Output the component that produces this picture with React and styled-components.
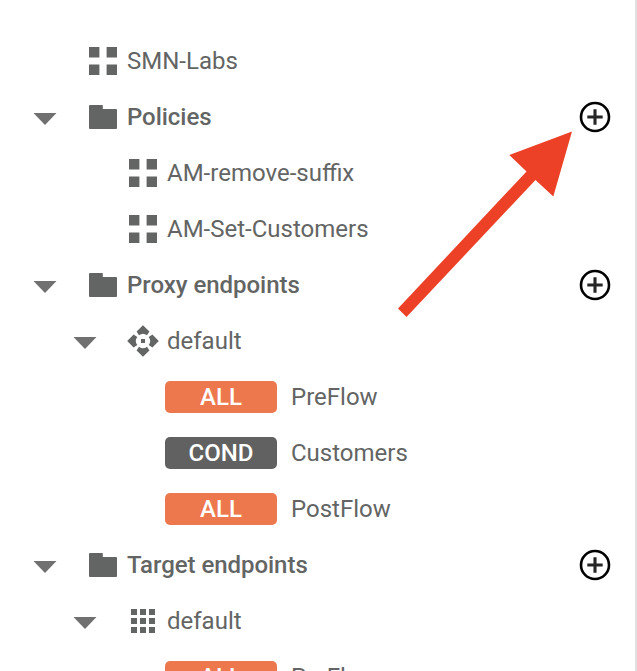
import React from "react";
import styled, { createGlobalStyle } from "styled-components";

const GlobalStyle = createGlobalStyle`
  html, body { margin: 0; background: #fff; overflow: hidden; }
`;

const Panel = styled.div`
  position: relative;
  box-sizing: border-box;
  width: 637px;
  height: 671px;
  padding-top: 33px;
  overflow: hidden;
  background: #fff;
  border-right: 2px solid #e0e0e0;
  font-family: Roboto, sans-serif;
  font-size: 24px;
  color: #636564;
`;

const Row = styled.div`
  display: flex;
  align-items: center;
  height: 56px;
  padding-left: ${(p) => 33 + p.$level * 40}px;
  padding-right: 24px;
`;

const CaretSlot = styled.span`
  display: flex;
  flex: none;
  width: 54px;
  padding-top: 4px;
`;

const IconSlot = styled.span`
  display: flex;
  flex: none;
  width: 40px;
`;

const Label = styled.span`
  flex: 1;
  line-height: 28px;
  white-space: nowrap;
  font-weight: ${(p) => (p.$strong ? 500 : 400)};
  letter-spacing: ${(p) => (p.$strong ? "-0.04px" : "normal")};
`;

const AddButton = styled.button`
  display: flex;
  padding: 0;
  border: 0;
  background: none;
  color: #000;
`;

const Badge = styled.span`
  display: flex;
  flex: none;
  align-items: center;
  justify-content: center;
  width: 112px;
  height: 32px;
  margin: 0 14px 0 12px;
  border-radius: 5px;
  background: ${(p) => (p.$kind === "ALL" ? "#ee784d" : "#616161")};
  color: #fff;
  font-weight: 500;
  line-height: 32px;
`;

const Pointer = styled.svg`
  position: absolute;
  left: 390px;
  top: 125px;
  pointer-events: none;
`;

const Caret = () => (
  <svg width="24" height="12" viewBox="0 0 24 12">
    <path d="M0.5 0h23L12 12z" fill="#707070" />
  </svg>
);

const PolicyIcon = () => (
  <svg width="32" height="32" viewBox="0 0 32 32" fill="#636564">
    <path d="M2 2h10.4v10.4H2zM19.6 2H30v10.4H19.6zM2 19.6h10.4V30H2zM19.6 19.6H30V30H19.6z" />
  </svg>
);

const FolderIcon = () => (
  <svg width="32" height="32" viewBox="0 0 32 32" fill="#636564">
    <path d="M3 4H15Q15.8 4 15.8 5V8H29Q30 8 30 9V27Q30 28 29 28H3Q2 28 2 27V5Q2 4 3 4z" />
  </svg>
);

const ProxyIcon = () => (
  <svg width="32" height="32" viewBox="0 0 32 32" fill="#636564">
    {[0, 90, 180, 270].map((angle) => (
      <path
        key={angle}
        transform={`rotate(${angle} 16 16)`}
        d="M16 0.2L22.4 6.6L20 10.3Q16 7.2 12 10.3L9.6 6.6z"
      />
    ))}
    <rect x="14" y="14" width="4" height="4" />
  </svg>
);

const TargetIcon = () => (
  <svg width="32" height="32" viewBox="0 0 32 32" fill="#636564">
    {[4, 13, 22].map((y) =>
      [4, 13, 22].map((x) => (
        <rect key={`${x}-${y}`} x={x} y={y} width="6" height="6" />
      ))
    )}
  </svg>
);

const AddIcon = () => (
  <svg width="32" height="32" viewBox="0 0 32 32" fill="none" stroke="currentColor">
    <circle cx="16" cy="16" r="14" strokeWidth="2.6" />
    <path d="M16 8.3v15.4M8.3 16h15.4" stroke="#262626" strokeWidth="3.1" />
  </svg>
);

const icons = {
  policy: PolicyIcon,
  folder: FolderIcon,
  proxy: ProxyIcon,
  target: TargetIcon,
};

const rows = [
  { level: 0, icon: "policy", label: "SMN-Labs" },
  { level: 0, icon: "folder", label: "Policies", group: true, open: true },
  { level: 1, icon: "policy", label: "AM-remove-suffix" },
  { level: 1, icon: "policy", label: "AM-Set-Customers" },
  { level: 0, icon: "folder", label: "Proxy endpoints", group: true, open: true },
  { level: 1, icon: "proxy", label: "default", open: true },
  { level: 3, badge: "ALL", label: "PreFlow" },
  { level: 3, badge: "COND", label: "Customers" },
  { level: 3, badge: "ALL", label: "PostFlow" },
  { level: 0, icon: "folder", label: "Target endpoints", group: true, open: true },
  { level: 1, icon: "target", label: "default", open: true },
  { level: 3, badge: "ALL", label: "PreFlow" },
];

function TreeRow({ level, icon, label, group, open, badge }) {
  const Icon = icons[icon];
  return (
    <Row $level={level}>
      {badge ? (
        <Badge $kind={badge}>{badge}</Badge>
      ) : (
        <>
          <CaretSlot>{open && <Caret />}</CaretSlot>
          <IconSlot>
            <Icon />
          </IconSlot>
        </>
      )}
      <Label $strong={group}>{label}</Label>
      {group && (
        <AddButton aria-label={`Add to ${label}`}>
          <AddIcon />
        </AddButton>
      )}
    </Row>
  );
}

export default function App() {
  return (
    <>
      <GlobalStyle />
      <Panel>
        {rows.map((row, i) => (
          <TreeRow key={i} {...row} />
        ))}
        <Pointer width="190" height="200" viewBox="390 125 190 200">
          <path
            d="M572 131.5L553.3 196.5L535.5 180L406.5 317L398 308.5L526.5 171.5L509.3 155z"
            fill="#ec4127"
          />
        </Pointer>
      </Panel>
    </>
  );
}
